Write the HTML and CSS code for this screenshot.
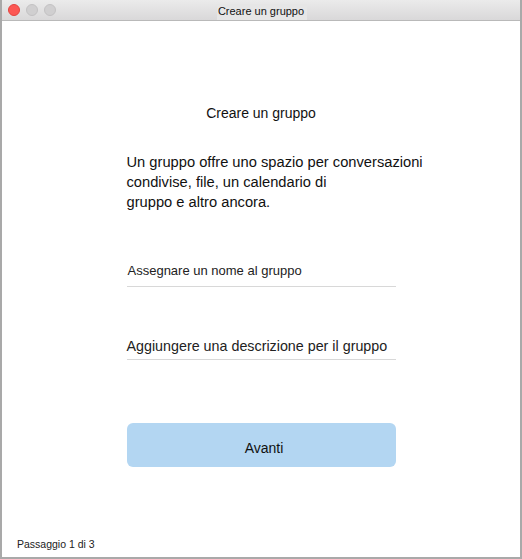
FILE: index.html
```html
<!DOCTYPE html>
<html lang="it">
<head>
<meta charset="utf-8">
<link rel="stylesheet" href="styles.css">
</head>
<body>
<div class="window">
  <div class="titlebar">
    <div class="lights">
      <span class="light red"></span>
      <span class="light gray"></span>
      <span class="light gray"></span>
    </div>
    <div class="title">Creare un gruppo</div>
  </div>
  <div class="content">
    <div class="column">
      <h1 class="heading">Creare un gruppo</h1>
      <p class="intro">Un gruppo offre uno spazio per conversazioni<br>condivise, file, un calendario di<br>gruppo e altro ancora.</p>
      <div class="field field-name">Assegnare un nome al gruppo</div>
      <div class="field field-desc">Aggiungere una descrizione per il gruppo</div>
      <div class="button">Avanti</div>
    </div>
    <div class="footer">Passaggio 1 di 3</div>
  </div>
</div>
</body>
</html>
```
FILE: styles.css
```css
html, body {
  margin: 0;
  padding: 0;
  background: #ffffff;
}
body {
  font-family: "Liberation Sans", Arial, sans-serif;
  color: #1a1a1a;
}
.window {
  box-sizing: border-box;
  width: 522px;
  height: 559px;
  border-left: 2px solid #a9a9a9;
  border-right: 2px solid #a9a9a9;
  border-bottom: 2px solid #a9a9a9;
  display: flex;
  flex-direction: column;
}
.titlebar {
  position: relative;
  height: 20px;
  background: linear-gradient(#ebebeb, #d9d8d9);
  border-bottom: 1px solid #b9b9b9;
  display: flex;
  align-items: flex-end;
  justify-content: center;
}
.lights {
  position: absolute;
  left: 6px;
  top: 4px;
  display: flex;
  gap: 6px;
}
.light {
  width: 12px;
  height: 12px;
  border-radius: 50%;
}
.light.red {
  background: #fc5753;
  border: 0.5px solid #e3443f;
  box-sizing: border-box;
}
.light.gray {
  background: #d0cfd0;
  border: 0.5px solid #c3c2c3;
  box-sizing: border-box;
}
.title {
  font-size: 11px;
  color: #111;
  background: #e6e6e6;
  padding: 1px 3px 2px 1px;
  margin-left: 2px;
  line-height: 13px;
}
.content {
  flex: 1;
  display: flex;
  flex-direction: column;
  position: relative;
}
.column {
  width: 269px;
  margin: 0 auto;
  display: flex;
  flex-direction: column;
}
.heading {
  margin: 83px 0 0 0;
  font-size: 14px;
  font-weight: normal;
  text-align: center;
  line-height: 18px;
  color: #111;
}
.intro {
  margin: 30px 0 0 0;
  font-size: 14.7px;
  line-height: 20px;
  white-space: nowrap;
  color: #111;
}
.field {
  border-bottom: 1.5px solid #d8d8d8;
  color: #222;
  white-space: nowrap;
}
.field-name {
  margin-top: 50px;
  font-size: 13px;
  line-height: 18px;
  padding: 0 0 6px 1px;
}
.field-desc {
  margin-top: 50px;
  font-size: 14.3px;
  line-height: 18px;
  padding: 0 0 4px 0;
}
.button {
  margin-top: 63px;
  height: 44px;
  box-sizing: border-box;
  padding: 5px 0 0 6px;
  border-radius: 6px;
  background: #b3d6f2;
  display: flex;
  align-items: center;
  justify-content: center;
  font-size: 14px;
  color: #111;
}
.footer {
  margin-top: auto;
  padding: 0 0 7px 15px;
  font-size: 10.5px;
  color: #222;
}
```
